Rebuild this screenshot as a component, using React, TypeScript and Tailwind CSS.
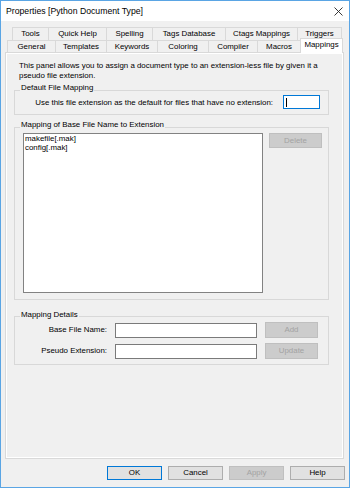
import React from 'react';

const topTabs = [
  { label: 'Tools', w: 'w-[36px]' },
  { label: 'Quick Help', w: 'w-[58px]' },
  { label: 'Spelling', w: 'w-[46px]' },
  { label: 'Tags Database', w: 'w-[73px]' },
  { label: 'Ctags Mappings', w: 'w-[72px]' },
  { label: 'Triggers', w: 'w-[45px]' },
];

const bottomTabs = [
  { label: 'General', w: 'w-[48px]' },
  { label: 'Templates', w: 'w-[51px]' },
  { label: 'Keywords', w: 'w-[51px]' },
  { label: 'Coloring', w: 'w-[51px]' },
  { label: 'Compiler', w: 'w-[49px]' },
  { label: 'Macros', w: 'w-[43px]' },
];

const App: React.FC = () => {
  return (
    <div className="w-[350px] h-[488px] border border-[#5aa5e4] bg-[#f0f0f0] flex flex-col font-['Liberation_Sans',Arial,sans-serif] text-[7.9px] leading-[10px] text-black">
      {/* Title bar */}
      <div className="h-[20px] bg-white flex items-center justify-between pl-[5px] pr-[6px]">
        <span className="text-[8.7px]">Properties [Python Document Type]</span>
        <svg width="9" height="9" viewBox="0 0 9 9">
          <path d="M0.5 0.5 L8.5 8.5 M8.5 0.5 L0.5 8.5" stroke="#222" strokeWidth="0.9" />
        </svg>
      </div>

      <div className="flex-1 flex flex-col pt-[6px]">
        {/* Back tab row */}
        <div className="flex ml-[11px] h-[13px]">
          {topTabs.map((t, i) => (
            <div
              key={t.label}
              className={`${t.w} h-[13px] border-t border-l border-[#d9d9d9] flex items-center justify-center ${
                i === topTabs.length - 1 ? 'border-r' : ''
              }`}
            >
              {t.label}
            </div>
          ))}
        </div>

        {/* Front tab row */}
        <div className="flex items-start ml-[6px] h-[12px]">
          {bottomTabs.map((t) => (
            <div
              key={t.label}
              className={`${t.w} h-[12px] border-t border-l border-[#d9d9d9] flex items-center justify-center`}
            >
              {t.label}
            </div>
          ))}
          <div className="relative z-10 w-[43px] h-[15px] -mt-[2px] bg-white border-t border-x border-[#d9d9d9] flex items-start justify-center pt-[1px]">
            Mappings
          </div>
        </div>

        {/* Tab panel */}
        <div className="ml-[4px] w-[339px] h-[407px] border border-[#d9d9d9] shadow-[inset_1px_1px_0_#ffffff,inset_-1px_-1px_0_#ffffff] pt-[8px] flex flex-col">
          <p className="pl-[13px] pr-[20px]">
            This panel allows you to assign a document type to an extension-less file by given it a pseudo file extension.
          </p>

          {/* Default File Mapping */}
          <div className="ml-[8px] w-[315px] mt-[9px] border border-[#d8d8d8] pb-[5px]">
            <div className="-mt-[8px] ml-[5px] w-fit px-[1px] bg-[#f0f0f0]">Default File Mapping</div>
            <div className="mt-[2px] flex items-center justify-end gap-[10px] pr-[8px]">
              <span className="mt-[2px]">Use this file extension as the default for files that have no extension:</span>
              <div className="w-[37px] h-[14px] bg-white border border-[#0078d7] flex items-center">
                <div className="ml-[2px] w-px h-[9px] bg-black" />
              </div>
            </div>
          </div>

          {/* Mapping of Base File Name to Extension */}
          <div className="ml-[8px] w-[315px] mt-[12px] border border-[#d8d8d8] pb-[6px]">
            <div className="-mt-[8px] ml-[5px] w-fit px-[1px] bg-[#f0f0f0]">Mapping of Base File Name to Extension</div>
            <div className="mt-[3px] ml-[8px] flex items-start gap-[6px]">
              <div className="w-[240px] h-[160px] bg-white border border-[#828282] pl-[1px] leading-[9px]">
                <div>makefile[.mak]</div>
                <div>config[.mak]</div>
              </div>
              <div className="w-[53px] h-[15px] bg-[#cccccc] border border-[#bfbfbf] text-[#a3a3a3] flex items-center justify-center">
                Delete
              </div>
            </div>
          </div>

          {/* Mapping Details */}
          <div className="ml-[8px] w-[315px] mt-[16px] border border-[#d8d8d8] pb-[5px]">
            <div className="-mt-[7px] ml-[5px] w-fit px-[1px] bg-[#f0f0f0]">Mapping Details</div>
            <div className="mt-[2px] flex flex-col gap-[5px]">
              <div className="flex items-center gap-[8px]">
                <span className="w-[92px] text-right">Base File Name:</span>
                <div className="w-[142px] h-[15px] bg-white border border-[#7a7a7a]" />
                <div className="w-[53px] h-[16px] bg-[#cccccc] border border-[#bfbfbf] text-[#a3a3a3] flex items-center justify-center">
                  Add
                </div>
              </div>
              <div className="flex items-center gap-[8px]">
                <span className="w-[92px] text-right">Pseudo Extension:</span>
                <div className="w-[142px] h-[15px] bg-white border border-[#7a7a7a]" />
                <div className="w-[53px] h-[16px] bg-[#cccccc] border border-[#bfbfbf] text-[#a3a3a3] flex items-center justify-center">
                  Update
                </div>
              </div>
            </div>
          </div>
        </div>

        {/* Dialog buttons */}
        <div className="mt-[7px] flex justify-end gap-[6px] pr-[4px]">
          <div className="w-[55px] h-[14px] bg-[#e1e1e1] border border-[#0078d7] flex items-center justify-center">OK</div>
          <div className="w-[55px] h-[14px] bg-[#e1e1e1] border border-[#adadad] flex items-center justify-center">Cancel</div>
          <div className="w-[55px] h-[14px] bg-[#cccccc] border border-[#bfbfbf] text-[#a3a3a3] flex items-center justify-center">Apply</div>
          <div className="w-[55px] h-[14px] bg-[#e1e1e1] border border-[#adadad] flex items-center justify-center">Help</div>
        </div>
      </div>
    </div>
  );
};

export default App;
